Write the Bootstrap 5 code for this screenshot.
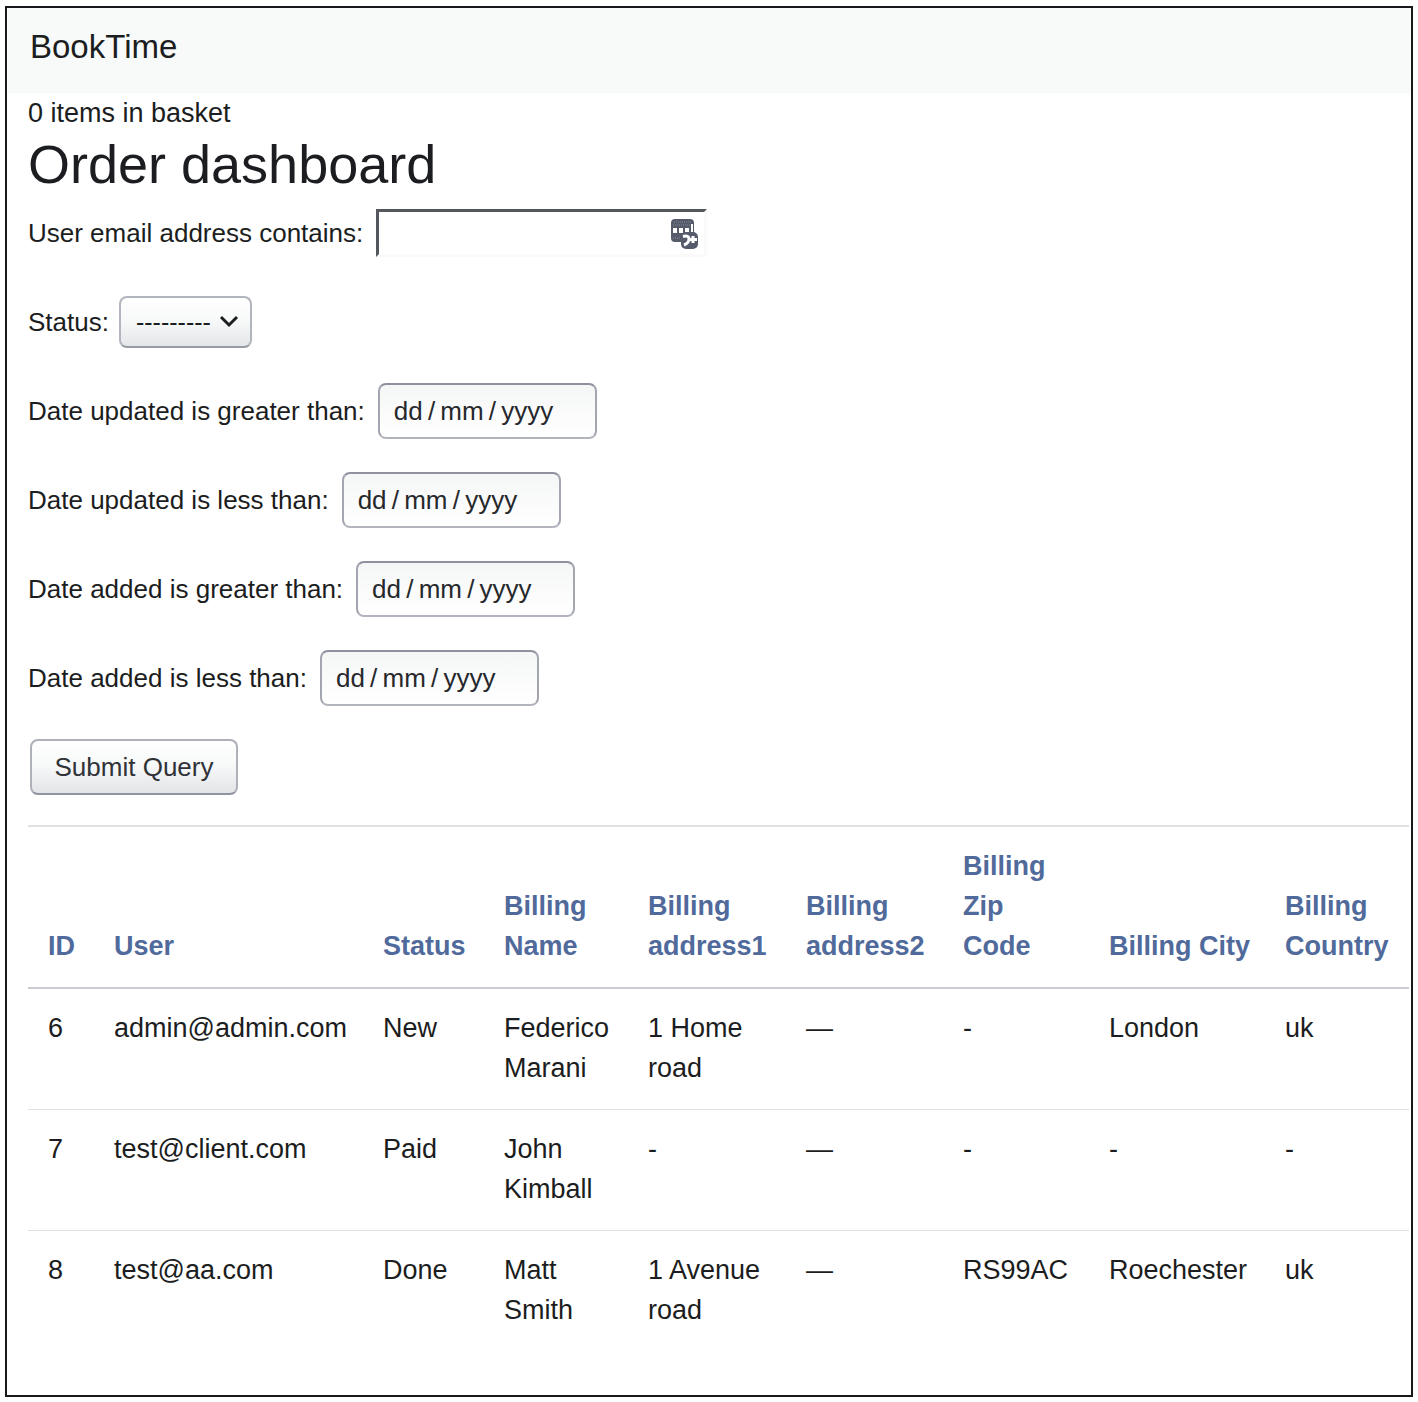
<!DOCTYPE html>
<html lang="en">
<head>
<meta charset="utf-8">
<meta name="viewport" content="width=device-width, initial-scale=1">
<title>BookTime - Order dashboard</title>
<link href="https://cdn.jsdelivr.net/npm/bootstrap@5.3.0/dist/css/bootstrap.min.css" rel="stylesheet">
<style>
body { font-family: "Liberation Sans", Arial, sans-serif; font-size: 27px; line-height: 40px; color: #1b1d20; background: #fefefe; padding: 6px 5px; }
.page-frame { border: 2px solid #17181b; background: #fff; padding-bottom: 44px; }
.site-nav { background: #f8faf9; height: 85px; padding: 0 22px 8px; margin-left: 1px; }
.site-nav .navbar-brand { font-size: 33px; line-height: 48px; color: #1b1d20; }
.page-body { padding: 0 2px 0 21px; }
.page-title { font-size: 54px; line-height: 62px; margin-bottom: 10px; font-weight: 400; }
.filters { gap: 33px; margin-bottom: 30px; font-size: 26px; }
.filter-row { min-height: 56px; gap: 13px; }
.email-box { width: 331px; }
.email-box input { width: 100%; height: 48px; border: 3px solid; border-color: #55575f #fafafa #fafafa #55575f; padding: 0 44px 0 10px; background: #fff; }
.email-box svg { position: absolute; right: 8px; top: 9px; }
.status-select, .date-box, .submit-btn { border: 2px solid #a3a6b0; border-radius: 8px; font-size: 26px; line-height: 40px; color: #1b1d20; }
.status-row { gap: 10px; }
.status-select { width: 133px; height: 52px; padding: 0 30px 0 15px; font-size: 25px; border-color: #b2b5bd #b2b5bd #989ba6;
  background: url("data:image/svg+xml,%3Csvg xmlns='http://www.w3.org/2000/svg' width='20' height='14' viewBox='0 0 20 14'%3E%3Cpath d='M2 2l8 8 8-8' fill='none' stroke='%231b1d20' stroke-width='3'/%3E%3C/svg%3E") no-repeat right 11px center, linear-gradient(#fff, #f8f9f9 45%, #e5e6e9); }
.date-box { width: 219px; height: 56px; padding: 0 14px; border-color: #8f929e #a3a6b0 #b2b5bd; background: linear-gradient(#f5f6f6, #fff); }
.date-box::placeholder { color: #26282c; opacity: 1; }
.submit-btn { width: 208px; height: 56px; margin-left: 2px; padding: 0; color: #303238; border-color: #aeb1b9 #aeb1b9 #9194a0; background: linear-gradient(#fff, #f8f9f9 45%, #e3e4e7); }
.orders { table-layout: fixed; margin: 0; color: #1b1d20; border-top: 2px solid #dfe1e5; --bs-table-bg: transparent; }
.orders th, .orders td { padding: 19px 12px 21px 20px; border-color: #dfe1e5; color: #1b1d20; }
.orders thead th { vertical-align: bottom; border-bottom: 2px solid #c9ccd2; }
.orders thead th a { color: #506a9b; text-decoration: none; }
.orders tbody tr:last-child td { border-bottom: 0; }
.w-id { width: 66px; } .w-user { width: 269px; } .w-status { width: 121px; } .w-name { width: 144px; }
.w-addr1 { width: 158px; } .w-addr2 { width: 157px; } .w-zip { width: 146px; } .w-city { width: 176px; }
</style>
</head>
<body>
<div class="page-frame">
  <nav class="navbar site-nav"><a class="navbar-brand p-0 m-0" href="#">BookTime</a></nav>
  <main class="page-body">
    <div>0 items in basket</div>
    <h1 class="page-title">Order dashboard</h1>
    <form class="filters d-flex flex-column">
      <div class="filter-row d-flex align-items-center">
        <label for="email">User email address contains:</label>
        <div class="email-box position-relative d-flex">
          <input type="text" id="email" name="email">
          <svg width="28" height="32" viewBox="0 0 28 32" aria-hidden="true">
            <rect x="0" y="1" width="23" height="23" rx="4" fill="#555b6b"/>
            <path d="M3 4h18M2 7h19M2 20h9" stroke="#858a97" stroke-dasharray="1 1"/>
            <path d="M2 10h4v5H2zM8 10h4v5H8zM14 10h4v5h-4zM20 6h2v8h-2z" fill="#fff"/>
            <rect x="10" y="14" width="17" height="17" rx="5" fill="#555b6b"/>
            <path d="M12 18.500Q18 17 18 21Q18 25 13 27" fill="none" stroke="#fff" stroke-width="3"/>
            <path d="M22 18v7M19 21.500h7" stroke="#fff" stroke-width="3"/>
          </svg>
        </div>
      </div>
      <div class="filter-row status-row d-flex align-items-center">
        <label for="status">Status:</label>
        <select class="form-select status-select" id="status" name="status"><option>---------</option></select>
      </div>
      <div class="filter-row d-flex align-items-center">
        <label for="updated-gt">Date updated is greater than:</label>
        <input class="date-box" type="text" id="updated-gt" placeholder="dd&#8201;/&#8201;mm&#8201;/&#8201;yyyy">
      </div>
      <div class="filter-row d-flex align-items-center">
        <label for="updated-lt">Date updated is less than:</label>
        <input class="date-box" type="text" id="updated-lt" placeholder="dd&#8201;/&#8201;mm&#8201;/&#8201;yyyy">
      </div>
      <div class="filter-row d-flex align-items-center">
        <label for="added-gt">Date added is greater than:</label>
        <input class="date-box" type="text" id="added-gt" placeholder="dd&#8201;/&#8201;mm&#8201;/&#8201;yyyy">
      </div>
      <div class="filter-row d-flex align-items-center">
        <label for="added-lt">Date added is less than:</label>
        <input class="date-box" type="text" id="added-lt" placeholder="dd&#8201;/&#8201;mm&#8201;/&#8201;yyyy">
      </div>
      <div><button class="btn submit-btn d-block" type="submit">Submit Query</button></div>
    </form>
    <table class="table orders">
      <colgroup><col class="w-id"><col class="w-user"><col class="w-status"><col class="w-name"><col class="w-addr1"><col class="w-addr2"><col class="w-zip"><col class="w-city"><col></colgroup>
      <thead>
        <tr>
          <th scope="col"><a href="#">ID</a></th>
          <th scope="col"><a href="#">User</a></th>
          <th scope="col"><a href="#">Status</a></th>
          <th scope="col"><a href="#">Billing Name</a></th>
          <th scope="col"><a href="#">Billing address1</a></th>
          <th scope="col"><a href="#">Billing address2</a></th>
          <th scope="col"><a href="#">Billing Zip<br>Code</a></th>
          <th scope="col" class="text-nowrap"><a href="#">Billing City</a></th>
          <th scope="col"><a href="#">Billing Country</a></th>
        </tr>
      </thead>
      <tbody>
        <tr><td>6</td><td>admin@admin.com</td><td>New</td><td>Federico Marani</td><td>1 Home road</td><td>—</td><td>-</td><td>London</td><td>uk</td></tr>
        <tr><td>7</td><td>test@client.com</td><td>Paid</td><td>John Kimball</td><td>-</td><td>—</td><td>-</td><td>-</td><td>-</td></tr>
        <tr><td>8</td><td>test@aa.com</td><td>Done</td><td>Matt Smith</td><td>1 Avenue road</td><td>—</td><td>RS99AC</td><td>Roechester</td><td>uk</td></tr>
      </tbody>
    </table>
  </main>
</div>
<script src="https://cdn.jsdelivr.net/npm/bootstrap@5.3.0/dist/js/bootstrap.bundle.min.js"></script>
</body>
</html>
